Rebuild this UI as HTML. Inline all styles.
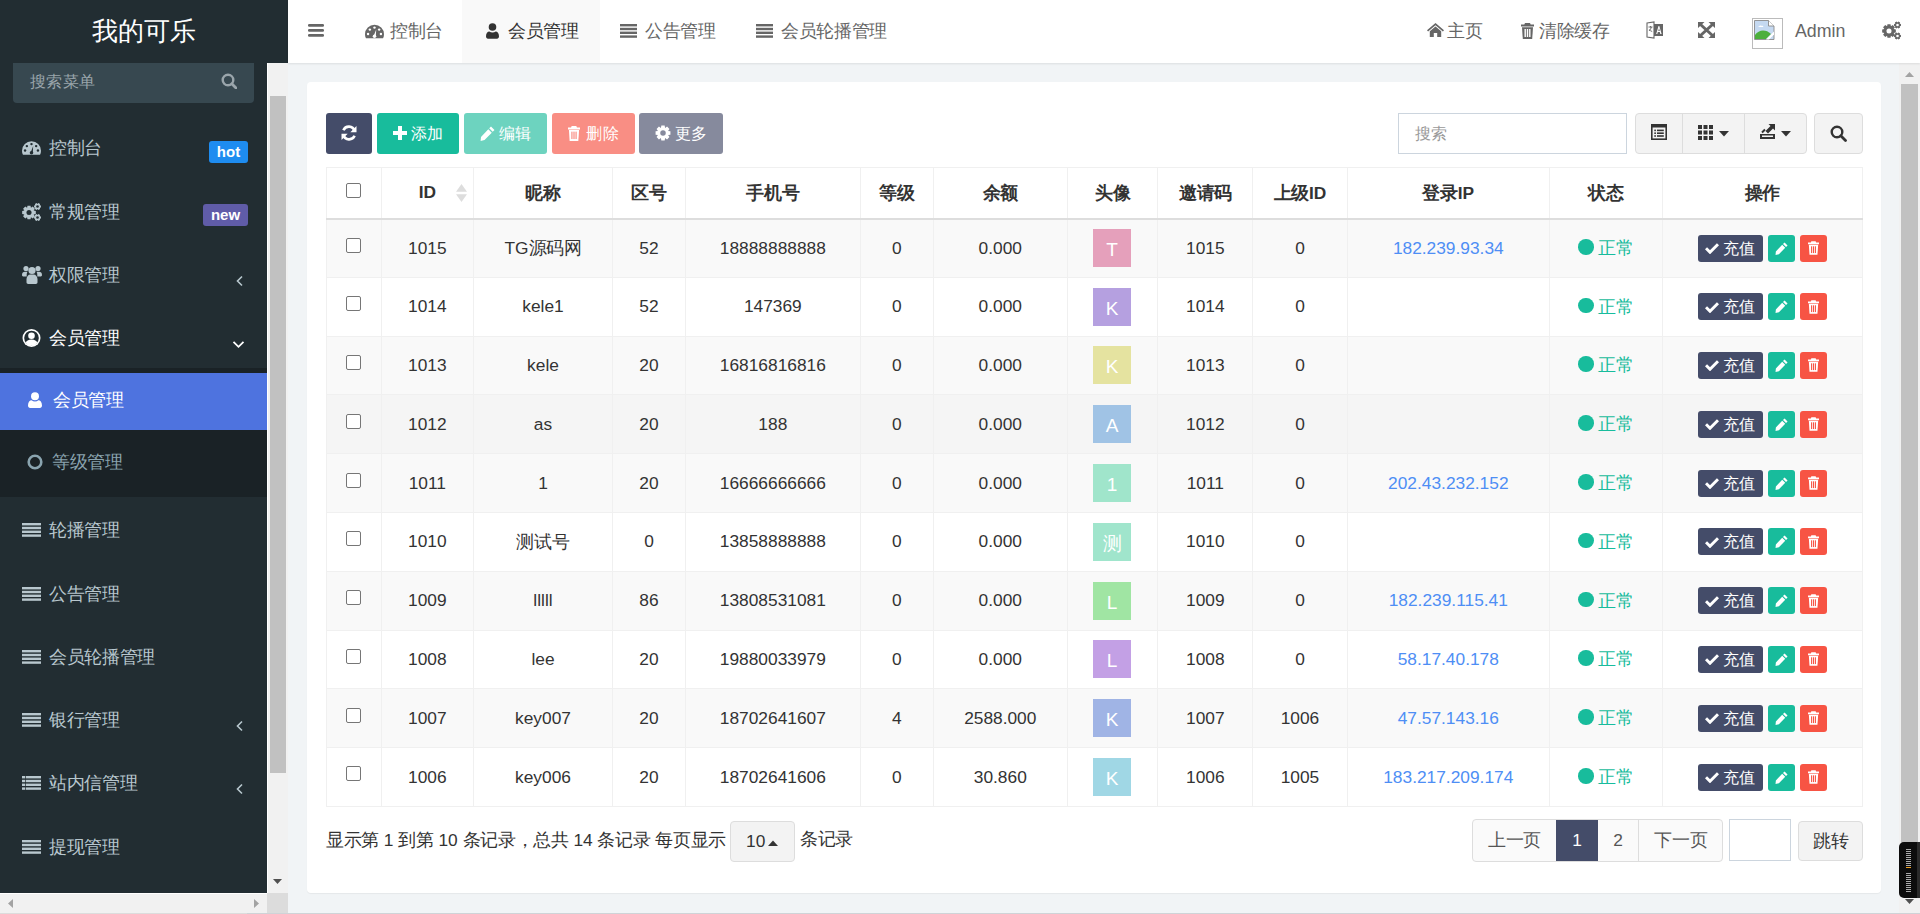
<!DOCTYPE html>
<html><head><meta charset="utf-8"><title>会员管理</title>
<style>
*{box-sizing:border-box;margin:0;padding:0}
html,body{width:1920px;height:914px;overflow:hidden;background:#f1f4f6;font-family:"Liberation Sans",sans-serif;font-size:17.33px;color:#333;position:relative}
svg{display:block}
i{font-style:normal}
#sidebar{position:absolute;left:0;top:0;width:267px;height:893px;background:#222d32;overflow:hidden}
#logo{position:absolute;left:0;top:0;width:288px;height:63px;background:#222d32;color:#fff;font-size:25.4px;line-height:63px;text-align:center}
#search{position:absolute;left:13px;top:63px;width:241px;height:40px;background:#374850;border-radius:0 0 4px 4px}
#search > span{position:absolute;left:17px;top:0;line-height:36px;color:#9aa5ab;font-size:16px}
.mi{position:absolute;left:0;width:267px;height:63px;font-size:17.33px}
.mi .ic{position:absolute;top:50%;transform:translateY(-50%)}
.mi .tx{position:absolute;top:50%;transform:translateY(-50%);white-space:nowrap;line-height:20px}
.badge{position:absolute;left:auto;right:19px;height:22px;line-height:22px;border-radius:3px;color:#fff;font-weight:bold;font-size:15px;text-align:center}
.arr{position:absolute}
#sub{position:absolute;left:0;top:368px;width:267px;height:129px;background:#1a2226}
#vscroll{position:absolute;left:267px;top:63px;width:21px;height:830px;background:#f1f1f1;border-left:1px solid #fff}
#vthumb{position:absolute;left:270px;top:96px;width:16px;height:677px;background:#c1c1c1}
#hscroll{position:absolute;left:0;top:893px;width:267px;height:21px;background:#f1f1f1;border-top:1px solid #fff;border-bottom:1px solid #dcdcdc}
#corner{position:absolute;left:267px;top:893px;width:21px;height:21px;background:#dcdcdc}
#header{position:absolute;left:288px;top:0;width:1632px;height:63px;background:#fff;box-shadow:0 1px 2px rgba(0,0,0,.09);z-index:5}
.nav{position:absolute;top:0;height:62px;line-height:62px;color:#666;white-space:nowrap}
#rscroll{position:absolute;left:1899px;top:63px;width:21px;height:851px;background:#f1f1f1}
#rthumb{position:absolute;left:1901px;top:84px;width:17px;height:760px;background:#c1c1c1}
#card{position:absolute;left:307px;top:82px;width:1574px;height:811px;background:#fff;border-radius:4px;box-shadow:0 1px 1px rgba(0,0,0,.05)}
.btn{position:absolute;top:113px;height:41px;border-radius:3px;color:#fff;line-height:40px;text-align:center;font-size:16px;white-space:nowrap}
#tbl{position:absolute;left:326px;top:167px;border-collapse:collapse;table-layout:fixed;width:1536px}
#tbl td,#tbl th{border:1px solid #f0f0f0;text-align:center;vertical-align:middle;white-space:nowrap;overflow:hidden;padding:0}
#tbl th{height:51px;font-weight:bold;color:#333;border-bottom:2px solid #ddd}
#tbl td{height:58.8px;color:#333}
#tbl tr.odd td{background:#f9f9f9}
#tbl tr.hov td{background:#f5f5f5}
.av{display:inline-block;width:38px;height:38px;line-height:41px;color:#fff;font-size:19px;vertical-align:middle;margin-left:-2px;text-indent:1px}
.ip{color:#4e8ef5}
.st{color:#18bc9c}
.dot{display:inline-block;width:15.5px;height:15.5px;border-radius:50%;background:#18bc9c;vertical-align:-0.5px;margin-right:4px}
.ab{display:inline-block;height:27px;line-height:27px;border-radius:3px;color:#fff;vertical-align:middle;font-size:15.6px;text-align:center}
.cb{display:inline-block;width:15px;height:15px;border:1px solid #767676;border-radius:2px;background:#fff;vertical-align:middle}
.z{font-size:1.02em}
.c{display:inline-block;width:1em;text-align:center;font-style:normal}

</style></head><body>
<div id="sidebar"><div id="search"><span><span class="z"><i class="c">搜</i><i class="c">索</i><i class="c">菜</i><i class="c">单</i></span></span><i style="position:absolute;left:208px;top:9.5px"><svg width="16" height="16" viewBox="0 0 16 16" ><circle cx="7" cy="7" r="5.3" fill="none" stroke="#9aa5ab" stroke-width="2.4"/><path d="M10.8 10.8L15.5 15.5" stroke="#9aa5ab" stroke-width="2.8" stroke-linecap="round"/></svg></i></div><div class="mi" style="top:116.5px;color:#b8c7ce"><span class="ic" style="left:22px"><svg width="19" height="15" viewBox="0 0 18 14.2" ><path d="M9 0.6A9 9 0 0 0 0 9.6c0 1.5.3 2.8.9 4h16.2c.6-1.2.9-2.5.9-4A9 9 0 0 0 9 .6z" fill="#b8c7ce"/><circle cx="2.9" cy="9.4" r="1.15" fill="#222d32"/><circle cx="4.6" cy="5.3" r="1.15" fill="#222d32"/><circle cx="9" cy="3.4" r="1.15" fill="#222d32"/><circle cx="13.4" cy="5.3" r="1.15" fill="#222d32"/><circle cx="15.1" cy="9.4" r="1.15" fill="#222d32"/><path d="M8.3 11.2L10.6 5.2L10.2 11.6z" fill="#222d32"/><circle cx="9" cy="11.6" r="1.7" fill="#222d32"/></svg></span><span class="tx" style="left:49px"><span class="z"><i class="c">控</i><i class="c">制</i><i class="c">台</i></span></span><span class="badge" style="top:24px;background:#1e8cf0;width:39px">hot</span></div><div class="mi" style="top:180.5px;color:#b8c7ce"><span class="ic" style="left:22px"><svg width="20" height="19" viewBox="0 0 20 19" ><path d="M11.66 8.07 L13.83 8.47 L13.83 11.53 L11.66 11.93 L11.66 11.93 L12.91 13.75 L10.75 15.91 L8.93 14.66 L8.93 14.66 L8.53 16.83 L5.47 16.83 L5.07 14.66 L5.07 14.66 L3.25 15.91 L1.09 13.75 L2.34 11.93 L2.34 11.93 L0.17 11.53 L0.17 8.47 L2.34 8.07 L2.34 8.07 L1.09 6.25 L3.25 4.09 L5.07 5.34 L5.07 5.34 L5.47 3.17 L8.53 3.17 L8.93 5.34 L8.93 5.34 L10.75 4.09 L12.91 6.25 L11.66 8.07z" fill="#b8c7ce"/><circle cx="7" cy="10" r="2.52" fill="#222d32"/><path d="M17.74 2.70 L18.95 2.96 L18.95 5.04 L17.74 5.30 L17.74 5.30 L18.12 6.46 L16.32 7.50 L15.50 6.59 L15.50 6.59 L14.68 7.50 L12.88 6.46 L13.26 5.30 L13.26 5.30 L12.05 5.04 L12.05 2.96 L13.26 2.70 L13.26 2.70 L12.88 1.54 L14.68 0.50 L15.50 1.41 L15.50 1.41 L16.32 0.50 L18.12 1.54 L17.74 2.70z" fill="#b8c7ce"/><circle cx="15.5" cy="4" r="1.30" fill="#222d32"/><path d="M17.74 13.70 L18.95 13.96 L18.95 16.04 L17.74 16.30 L17.74 16.30 L18.12 17.46 L16.32 18.50 L15.50 17.59 L15.50 17.59 L14.68 18.50 L12.88 17.46 L13.26 16.30 L13.26 16.30 L12.05 16.04 L12.05 13.96 L13.26 13.70 L13.26 13.70 L12.88 12.54 L14.68 11.50 L15.50 12.41 L15.50 12.41 L16.32 11.50 L18.12 12.54 L17.74 13.70z" fill="#b8c7ce"/><circle cx="15.5" cy="15" r="1.30" fill="#222d32"/></svg></span><span class="tx" style="left:49px"><span class="z"><i class="c">常</i><i class="c">规</i><i class="c">管</i><i class="c">理</i></span></span><span class="badge" style="top:23.5px;background:#605ca8;width:45px">new</span></div><div class="mi" style="top:243.5px;color:#b8c7ce"><span class="ic" style="left:22px"><svg width="20" height="19" viewBox="0 0 20 19" ><circle cx="4" cy="3" r="2.6" fill="#b8c7ce"/><circle cx="16" cy="3" r="2.6" fill="#b8c7ce"/><path d="M0 9.5c0-2 1.2-3.2 3-3.2h2.5c-.5.8-.8 1.8-.8 3v1.6H1.2C.5 10.9 0 10.4 0 9.5z" fill="#b8c7ce"/><path d="M20 9.5c0-2-1.2-3.2-3-3.2h-2.5c.5.8.8 1.8.8 3v1.6h3.5c.7 0 1.2-.5 1.2-1.4z" fill="#b8c7ce"/><circle cx="10" cy="5" r="3.6" fill="#b8c7ce"/><path d="M4.5 14c0-3 1.6-5 4-5h3c2.4 0 4 2 4 5v2.8c0 1-.7 1.7-1.7 1.7H6.2c-1 0-1.7-.7-1.7-1.7z" fill="#b8c7ce"/></svg></span><span class="tx" style="left:49px"><span class="z"><i class="c">权</i><i class="c">限</i><i class="c">管</i><i class="c">理</i></span></span><span class="arr" style="top:31.5px;left:235px"><svg width="9" height="12" viewBox="0 0 9 12" ><path d="M7 1.5L2.5 6L7 10.5" fill="none" stroke="#b8c7ce" stroke-width="1.6"/></svg></span></div><div class="mi" style="top:306.5px;color:#fff"><span class="ic" style="left:22px"><svg width="19" height="19" viewBox="0 0 19 19" ><circle cx="9.5" cy="9.5" r="9" fill="#fff"/><circle cx="9.5" cy="9.5" r="7.3" fill="#222d32"/><circle cx="9.5" cy="7.3" r="3.3" fill="#fff"/><path d="M3.6 14.5c.8-2.2 2.6-3.6 5.9-3.6s5.1 1.4 5.9 3.6c-1.4 1.6-3.5 2.6-5.9 2.6s-4.5-1-5.9-2.6z" fill="#fff"/></svg></span><span class="tx" style="left:49px"><span class="z"><i class="c">会</i><i class="c">员</i><i class="c">管</i><i class="c">理</i></span></span><span class="arr" style="top:33px;left:232px"><svg width="13" height="9" viewBox="0 0 13 9" ><path d="M1.5 1.8L6.5 6.8L11.5 1.8" fill="none" stroke="#fff" stroke-width="1.8"/></svg></span></div><div id="sub"><div style="position:absolute;left:0;top:4.6px;width:267px;height:57px;background:#4e73df"></div></div><div class="mi" style="top:368.5px;color:#fff"><span class="ic" style="left:28px"><svg width="14" height="16" viewBox="0 0 14 16" ><circle cx="7" cy="4.2" r="4" fill="#fff"/><path d="M0 13.5c0-3.4 1.8-5.2 3.6-5.2.9.8 2.1 1.2 3.4 1.2s2.5-.4 3.4-1.2c1.8 0 3.6 1.8 3.6 5.2 0 1.4-.9 2.5-2.2 2.5H2.2C.9 16 0 14.9 0 13.5z" fill="#fff"/></svg></span><span class="tx" style="left:53px"><span class="z"><i class="c">会</i><i class="c">员</i><i class="c">管</i><i class="c">理</i></span></span></div><div class="mi" style="top:430.5px;color:#8aa4af"><span class="ic" style="left:27px"><svg width="16" height="16" viewBox="0 0 16 16" ><circle cx="8" cy="8" r="6.3" fill="none" stroke="#8aa4af" stroke-width="2.6"/></svg></span><span class="tx" style="left:52px"><span class="z"><i class="c">等</i><i class="c">级</i><i class="c">管</i><i class="c">理</i></span></span></div><div class="mi" style="top:498.5px;color:#b8c7ce"><span class="ic" style="left:22px"><svg width="19" height="14" viewBox="0 0 19 14" ><rect x="0" y="0" width="19" height="2.4" fill="#b8c7ce"/><rect x="0" y="3.8" width="19" height="2.4" fill="#b8c7ce"/><rect x="0" y="7.6" width="19" height="2.4" fill="#b8c7ce"/><rect x="0" y="11.4" width="19" height="2.4" fill="#b8c7ce"/></svg></span><span class="tx" style="left:49px"><span class="z"><i class="c">轮</i><i class="c">播</i><i class="c">管</i><i class="c">理</i></span></span></div><div class="mi" style="top:562.5px;color:#b8c7ce"><span class="ic" style="left:22px"><svg width="19" height="14" viewBox="0 0 19 14" ><rect x="0" y="0" width="19" height="2.4" fill="#b8c7ce"/><rect x="0" y="3.8" width="19" height="2.4" fill="#b8c7ce"/><rect x="0" y="7.6" width="19" height="2.4" fill="#b8c7ce"/><rect x="0" y="11.4" width="19" height="2.4" fill="#b8c7ce"/></svg></span><span class="tx" style="left:49px"><span class="z"><i class="c">公</i><i class="c">告</i><i class="c">管</i><i class="c">理</i></span></span></div><div class="mi" style="top:625.5px;color:#b8c7ce"><span class="ic" style="left:22px"><svg width="19" height="14" viewBox="0 0 19 14" ><rect x="0" y="0" width="19" height="2.4" fill="#b8c7ce"/><rect x="0" y="3.8" width="19" height="2.4" fill="#b8c7ce"/><rect x="0" y="7.6" width="19" height="2.4" fill="#b8c7ce"/><rect x="0" y="11.4" width="19" height="2.4" fill="#b8c7ce"/></svg></span><span class="tx" style="left:49px"><span class="z"><i class="c">会</i><i class="c">员</i><i class="c">轮</i><i class="c">播</i><i class="c">管</i><i class="c">理</i></span></span></div><div class="mi" style="top:688.5px;color:#b8c7ce"><span class="ic" style="left:22px"><svg width="19" height="14" viewBox="0 0 19 14" ><rect x="0" y="0" width="19" height="2.4" fill="#b8c7ce"/><rect x="0" y="3.8" width="19" height="2.4" fill="#b8c7ce"/><rect x="0" y="7.6" width="19" height="2.4" fill="#b8c7ce"/><rect x="0" y="11.4" width="19" height="2.4" fill="#b8c7ce"/></svg></span><span class="tx" style="left:49px"><span class="z"><i class="c">银</i><i class="c">行</i><i class="c">管</i><i class="c">理</i></span></span><span class="arr" style="top:31.5px;left:235px"><svg width="9" height="12" viewBox="0 0 9 12" ><path d="M7 1.5L2.5 6L7 10.5" fill="none" stroke="#b8c7ce" stroke-width="1.6"/></svg></span></div><div class="mi" style="top:751.5px;color:#b8c7ce"><span class="ic" style="left:22px"><svg width="19" height="14" viewBox="0 0 19 14" ><rect x="0" y="0" width="3" height="2.4" fill="#b8c7ce"/><rect x="3.7" y="0" width="15.3" height="2.4" fill="#b8c7ce"/><rect x="0" y="3.8" width="3" height="2.4" fill="#b8c7ce"/><rect x="3.7" y="3.8" width="15.3" height="2.4" fill="#b8c7ce"/><rect x="0" y="7.6" width="3" height="2.4" fill="#b8c7ce"/><rect x="3.7" y="7.6" width="15.3" height="2.4" fill="#b8c7ce"/><rect x="0" y="11.4" width="3" height="2.4" fill="#b8c7ce"/><rect x="3.7" y="11.4" width="15.3" height="2.4" fill="#b8c7ce"/></svg></span><span class="tx" style="left:49px"><span class="z"><i class="c">站</i><i class="c">内</i><i class="c">信</i><i class="c">管</i><i class="c">理</i></span></span><span class="arr" style="top:31.5px;left:235px"><svg width="9" height="12" viewBox="0 0 9 12" ><path d="M7 1.5L2.5 6L7 10.5" fill="none" stroke="#b8c7ce" stroke-width="1.6"/></svg></span></div><div class="mi" style="top:815.5px;color:#b8c7ce"><span class="ic" style="left:22px"><svg width="19" height="14" viewBox="0 0 19 14" ><rect x="0" y="0" width="19" height="2.4" fill="#b8c7ce"/><rect x="0" y="3.8" width="19" height="2.4" fill="#b8c7ce"/><rect x="0" y="7.6" width="19" height="2.4" fill="#b8c7ce"/><rect x="0" y="11.4" width="19" height="2.4" fill="#b8c7ce"/></svg></span><span class="tx" style="left:49px"><span class="z"><i class="c">提</i><i class="c">现</i><i class="c">管</i><i class="c">理</i></span></span></div></div><div id="logo"><span class="z"><i class="c">我</i><i class="c">的</i><i class="c">可</i><i class="c">乐</i></span></div>
<div id="vscroll"></div><div id="vthumb"></div>
<div id="hscroll"></div><div id="corner"></div>
<div id="header"><i style="position:absolute;left:20px;top:24px"><svg width="16" height="13" viewBox="0 0 16 13" ><rect x="0" y="0" width="16" height="2.8" rx="1.2" fill="#666"/><rect x="0" y="5" width="16" height="2.8" rx="1.2" fill="#666"/><rect x="0" y="10" width="16" height="2.8" rx="1.2" fill="#666"/></svg></i><div class="nav" style="left:77px"><i style="position:absolute;left:0;top:24px"><svg width="19" height="15" viewBox="0 0 18 14.2" ><path d="M9 0.6A9 9 0 0 0 0 9.6c0 1.5.3 2.8.9 4h16.2c.6-1.2.9-2.5.9-4A9 9 0 0 0 9 .6z" fill="#666"/><circle cx="2.9" cy="9.4" r="1.15" fill="#fff"/><circle cx="4.6" cy="5.3" r="1.15" fill="#fff"/><circle cx="9" cy="3.4" r="1.15" fill="#fff"/><circle cx="13.4" cy="5.3" r="1.15" fill="#fff"/><circle cx="15.1" cy="9.4" r="1.15" fill="#fff"/><path d="M8.3 11.2L10.6 5.2L10.2 11.6z" fill="#fff"/><circle cx="9" cy="11.6" r="1.7" fill="#fff"/></svg></i><span style="position:absolute;left:25px;top:0"><span class="z"><i class="c">控</i><i class="c">制</i><i class="c">台</i></span></span></div><div style="position:absolute;left:174px;top:0;width:137.5px;height:62.5px;background:#f9f9f9"></div><div class="nav" style="left:198px;color:#333"><i style="position:absolute;left:0;top:23px"><svg width="13" height="16" viewBox="0 0 13 16" ><circle cx="6.5" cy="4" r="3.8" fill="#333"/><path d="M0 13.3c0-3.2 1.6-4.9 3.3-4.9.9.7 2 1.1 3.2 1.1s2.3-.4 3.2-1.1c1.7 0 3.3 1.7 3.3 4.9 0 1.5-.8 2.4-2 2.4H2C.8 15.7 0 14.8 0 13.3z" fill="#333"/></svg></i><span style="position:absolute;left:22px;top:0"><span class="z"><i class="c">会</i><i class="c">员</i><i class="c">管</i><i class="c">理</i></span></span></div><div class="nav" style="left:332px"><i style="position:absolute;left:0;top:24px"><svg width="17" height="14" viewBox="0 0 17 14" ><rect x="0" y="0" width="17" height="2.4" fill="#666"/><rect x="0" y="3.8" width="17" height="2.4" fill="#666"/><rect x="0" y="7.6" width="17" height="2.4" fill="#666"/><rect x="0" y="11.4" width="17" height="2.4" fill="#666"/></svg></i><span style="position:absolute;left:25px;top:0"><span class="z"><i class="c">公</i><i class="c">告</i><i class="c">管</i><i class="c">理</i></span></span></div><div class="nav" style="left:468px"><i style="position:absolute;left:0;top:24px"><svg width="17" height="14" viewBox="0 0 17 14" ><rect x="0" y="0" width="17" height="2.4" fill="#666"/><rect x="0" y="3.8" width="17" height="2.4" fill="#666"/><rect x="0" y="7.6" width="17" height="2.4" fill="#666"/><rect x="0" y="11.4" width="17" height="2.4" fill="#666"/></svg></i><span style="position:absolute;left:25px;top:0"><span class="z"><i class="c">会</i><i class="c">员</i><i class="c">轮</i><i class="c">播</i><i class="c">管</i><i class="c">理</i></span></span></div><div class="nav" style="left:1139px"><i style="position:absolute;left:0;top:23px"><svg width="17" height="14" viewBox="0 0 17 14" ><path d="M8.5 0L0 7.2l1.1 1.2L8.5 2.3l7.4 6.1L17 7.2z" fill="#666"/><path d="M2.8 8.3L8.5 3.6l5.7 4.7V14h-4V10H6.8v4h-4z" fill="#666"/></svg></i><span style="position:absolute;left:20px;top:0"><span class="z"><i class="c">主</i><i class="c">页</i></span></span></div><div class="nav" style="left:1233px"><i style="position:absolute;left:0;top:23px"><svg width="13" height="16" viewBox="0 0 13 16" ><path d="M4 0h5l.7 1.6H13v2H0v-2h3.3z" fill="#666"/><path d="M1 4.3h11l-.8 11.7H1.8z" fill="#666"/><rect x="3.5" y="6" width="1.4" height="8" fill="#fff"/><rect x="5.8" y="6" width="1.4" height="8" fill="#fff"/><rect x="8.1" y="6" width="1.4" height="8" fill="#fff"/></svg></i><span style="position:absolute;left:18px;top:0"><span class="z"><i class="c">清</i><i class="c">除</i><i class="c">缓</i><i class="c">存</i></span></span></div><i style="position:absolute;left:1358px;top:21px"><svg width="18" height="18" viewBox="0 0 18 18" ><path d="M1 2l7 -1v16l-7-1z" fill="none" stroke="#666" stroke-width="1.1"/><path d="M8 3h9v12H8z" fill="#666"/><path d="M10.2 13l2.3-8h.8l2.3 8h-1.3l-.5-1.9h-2l-.5 1.9zm2.1-3h1.5l-.75-2.8z" fill="#fff"/><path d="M2.5 6h4M4.5 5v1.5M3 10c1.2-1 2-2.4 2.5-4M3.2 8.5c.8 1 1.8 1.7 3 2" stroke="#666" stroke-width=".9" fill="none"/></svg></i><i style="position:absolute;left:1410px;top:22px"><svg width="17" height="16" viewBox="0 0 17 16" ><path d="M2.5 2.5L14.5 13.5M14.5 2.5L2.5 13.5" stroke="#666" stroke-width="3"/><path d="M0 0h6.5L0 6z M17 0h-6.5L17 6z M0 16h6.5L0 10z M17 16h-6.5L17 10z" fill="#666"/></svg></i><div style="position:absolute;left:1464px;top:18px;width:31px;height:31px;border:1px solid #bbb;background:#fff"><svg width="21" height="20" viewBox="0 0 21 20" style="position:absolute;left:1px;top:1px"><path d="M.5 .5h14l5.5 5.5v13.5H.5z" fill="#c5d9f1" stroke="#8a8a8a" stroke-width=".9"/><path d="M14.5 .5v5.5h5.5" fill="#fff" stroke="#8a8a8a" stroke-width=".9"/><path d="M5 6.5c.4-1.2 2-1.4 2.6-.6.8-.3 1.8.2 1.8 1H4.2c0-.3.3-.4.8-.4z" fill="#fff"/><path d="M1 19V15c2-3 5-4.5 8-4.5s5.5 1 8 3.5L12 19z" fill="#4caf3c"/><path d="M12 19.5L20 11.5v3L15 19.5z" fill="#fff"/></svg></div><div class="nav" style="left:1507px;font-size:17.8px">Admin</div><i style="position:absolute;left:1594px;top:21px"><svg width="20" height="19" viewBox="0 0 20 19" ><path d="M11.66 8.07 L13.83 8.47 L13.83 11.53 L11.66 11.93 L11.66 11.93 L12.91 13.75 L10.75 15.91 L8.93 14.66 L8.93 14.66 L8.53 16.83 L5.47 16.83 L5.07 14.66 L5.07 14.66 L3.25 15.91 L1.09 13.75 L2.34 11.93 L2.34 11.93 L0.17 11.53 L0.17 8.47 L2.34 8.07 L2.34 8.07 L1.09 6.25 L3.25 4.09 L5.07 5.34 L5.07 5.34 L5.47 3.17 L8.53 3.17 L8.93 5.34 L8.93 5.34 L10.75 4.09 L12.91 6.25 L11.66 8.07z" fill="#666"/><circle cx="7" cy="10" r="2.52" fill="#fff"/><path d="M17.74 2.70 L18.95 2.96 L18.95 5.04 L17.74 5.30 L17.74 5.30 L18.12 6.46 L16.32 7.50 L15.50 6.59 L15.50 6.59 L14.68 7.50 L12.88 6.46 L13.26 5.30 L13.26 5.30 L12.05 5.04 L12.05 2.96 L13.26 2.70 L13.26 2.70 L12.88 1.54 L14.68 0.50 L15.50 1.41 L15.50 1.41 L16.32 0.50 L18.12 1.54 L17.74 2.70z" fill="#666"/><circle cx="15.5" cy="4" r="1.30" fill="#fff"/><path d="M17.74 13.70 L18.95 13.96 L18.95 16.04 L17.74 16.30 L17.74 16.30 L18.12 17.46 L16.32 18.50 L15.50 17.59 L15.50 17.59 L14.68 18.50 L12.88 17.46 L13.26 16.30 L13.26 16.30 L12.05 16.04 L12.05 13.96 L13.26 13.70 L13.26 13.70 L12.88 12.54 L14.68 11.50 L15.50 12.41 L15.50 12.41 L16.32 11.50 L18.12 12.54 L17.74 13.70z" fill="#666"/><circle cx="15.5" cy="15" r="1.30" fill="#fff"/></svg></i></div>
<div id="rscroll"></div><div id="rthumb"></div>
<div id="card"></div><div class="btn" style="left:326px;width:46px;background:#444c69"><span style="display:inline-flex;align-items:center;height:40px"><svg width="16" height="16" viewBox="0 0 16 16" ><path d="M13.6 5.8A6 6 0 0 0 2.4 5.2" fill="none" stroke="#fff" stroke-width="2.6"/><path d="M15.5 1v6.2H9.3z" fill="#fff"/><path d="M2.4 10.2a6 6 0 0 0 11.2.6" fill="none" stroke="#fff" stroke-width="2.6"/><path d="M.5 15V8.8h6.2z" fill="#fff"/></svg></span></div><div class="btn" style="left:377px;width:82px;background:#18bc9c"><span style="display:inline-flex;align-items:center;height:40px;vertical-align:top"><svg width="14" height="14" viewBox="0 0 14 14" ><path d="M5 0h4v5h5v4H9v5H5V9H0V5h5z" fill="#fff"/></svg><span style="margin-left:4px"><span class="z"><i class="c">添</i><i class="c">加</i></span></span></span></div><div class="btn" style="left:464px;width:83px;background:#6dd3bf"><span style="display:inline-flex;align-items:center;height:40px;vertical-align:top"><svg width="15" height="15" viewBox="0 0 15 15" ><path d="M11 .5l3.5 3.5-1.8 1.8-3.5-3.5zM8.3 3.2l3.5 3.5L4.5 14 .6 14.9 1 11z" fill="#fff"/></svg><span style="margin-left:4px"><span class="z"><i class="c">编</i><i class="c">辑</i></span></span></span></div><div class="btn" style="left:552px;width:83px;background:#f98e84"><span style="display:inline-flex;align-items:center;height:40px;vertical-align:top"><svg width="12" height="15" viewBox="0 0 13 16" ><path d="M4 0h5l.7 1.6H13v2H0v-2h3.3z" fill="#fff"/><path d="M1 4.3h11l-.8 11.7H1.8z" fill="#fff"/><rect x="3.6" y="6" width="1.3" height="8" fill="#f98e84"/><rect x="5.85" y="6" width="1.3" height="8" fill="#f98e84"/><rect x="8.1" y="6" width="1.3" height="8" fill="#f98e84"/></svg><span style="margin-left:6px"><span class="z"><i class="c">删</i><i class="c">除</i></span></span></span></div><div class="btn" style="left:639px;width:84px;background:#868a9d"><span style="display:inline-flex;align-items:center;height:40px;vertical-align:top"><svg width="16" height="16" viewBox="0 0 16 16" ><path d="M13.06 5.91 L15.42 6.34 L15.42 9.66 L13.06 10.09 L13.06 10.09 L14.42 12.07 L12.07 14.42 L10.09 13.06 L10.09 13.06 L9.66 15.42 L6.34 15.42 L5.91 13.06 L5.91 13.06 L3.93 14.42 L1.58 12.07 L2.94 10.09 L2.94 10.09 L0.58 9.66 L0.58 6.34 L2.94 5.91 L2.94 5.91 L1.58 3.93 L3.93 1.58 L5.91 2.94 L5.91 2.94 L6.34 0.58 L9.66 0.58 L10.09 2.94 L10.09 2.94 L12.07 1.58 L14.42 3.93 L13.06 5.91z" fill="#fff"/><circle cx="8" cy="8" r="2.74" fill="#868a9d"/></svg><span style="margin-left:4px"><span class="z"><i class="c">更</i><i class="c">多</i></span></span></span></div><div style="position:absolute;left:1398px;top:113px;width:229px;height:41px;border:1px solid #ccd5de;background:#fff"><span style="position:absolute;left:16px;top:0;line-height:39px;color:#999;font-size:16px"><span class="z"><i class="c">搜</i><i class="c">索</i></span></span></div><div style="position:absolute;left:1635px;top:113px;width:172px;height:41px;border:1px solid #ddd;border-radius:4px;background:#f3f3f3"></div><div style="position:absolute;left:1682px;top:114px;width:1px;height:39px;background:#ddd"></div><div style="position:absolute;left:1744px;top:114px;width:1px;height:39px;background:#ddd"></div><i style="position:absolute;left:1651px;top:124px"><svg width="16" height="16" viewBox="0 0 16 16" ><rect x=".8" y=".8" width="14.4" height="14.4" fill="none" stroke="#333" stroke-width="1.6"/><rect x="1" y="1" width="14" height="2.5" fill="#333"/><rect x="3.3" y="5.6" width="1.6" height="1.6" fill="#333"/><rect x="6" y="5.6" width="6.8" height="1.6" fill="#333"/><rect x="3.3" y="8.4" width="1.6" height="1.6" fill="#333"/><rect x="6" y="8.4" width="6.8" height="1.6" fill="#333"/><rect x="3.3" y="11.2" width="1.6" height="1.6" fill="#333"/><rect x="6" y="11.2" width="6.8" height="1.6" fill="#333"/></svg></i><i style="position:absolute;left:1698px;top:125px"><svg width="15" height="15" viewBox="0 0 15 15" ><rect x="0" y="0" width="4" height="4" fill="#333"/><rect x="0" y="5.5" width="4" height="4" fill="#333"/><rect x="0" y="11" width="4" height="4" fill="#333"/><rect x="5.5" y="0" width="4" height="4" fill="#333"/><rect x="5.5" y="5.5" width="4" height="4" fill="#333"/><rect x="5.5" y="11" width="4" height="4" fill="#333"/><rect x="11" y="0" width="4" height="4" fill="#333"/><rect x="11" y="5.5" width="4" height="4" fill="#333"/><rect x="11" y="11" width="4" height="4" fill="#333"/></svg></i><i style="position:absolute;left:1719px;top:131px"><svg width="10" height="6" viewBox="0 0 10 6" ><path d="M0 0h10L5 5.5z" fill="#333"/></svg></i><i style="position:absolute;left:1760px;top:124px"><svg width="17" height="15" viewBox="0 0 17 15" ><rect x="0" y="10" width="15" height="5" fill="#333"/><rect x="2" y="11.5" width="11" height="1.5" fill="#f3f3f3"/><path d="M15 0v6.5l-2-2-5 5-2.5-2.5 5-5-2-2z" fill="#333"/><path d="M2 8.5L5 5.5" stroke="#333" stroke-width="2"/></svg></i><i style="position:absolute;left:1781px;top:131px"><svg width="10" height="6" viewBox="0 0 10 6" ><path d="M0 0h10L5 5.5z" fill="#333"/></svg></i><div style="position:absolute;left:1814px;top:113px;width:49px;height:41px;border:1px solid #ddd;border-radius:4px;background:#f3f3f3"></div><i style="position:absolute;left:1830px;top:125px"><svg width="17" height="17" viewBox="0 0 17 17" ><circle cx="7" cy="7" r="5.3" fill="none" stroke="#333" stroke-width="2.4"/><path d="M10.8 10.8L15.5 15.5" stroke="#333" stroke-width="2.8" stroke-linecap="round"/></svg></i><table id="tbl"><colgroup><col style="width:54.7px"><col style="width:92.3px"><col style="width:139px"><col style="width:73px"><col style="width:174.7px"><col style="width:73.3px"><col style="width:133.6px"><col style="width:90.9px"><col style="width:94.8px"><col style="width:94.4px"><col style="width:202.3px"><col style="width:112.7px"><col style="width:200.3px"></colgroup><tr class="hd"><th><span class="cb" style="position:relative;top:-3px"></span></th><th style="position:relative">ID<svg width="11" height="18" viewBox="0 0 11 18" style="position:absolute;right:6px;top:16px"><path d="M5.5 0L11 7.8H0z" fill="#ddd"/><path d="M5.5 18L11 10.2H0z" fill="#ddd"/></svg></th><th><span class="z"><i class="c">昵</i><i class="c">称</i></span></th><th><span class="z"><i class="c">区</i><i class="c">号</i></span></th><th><span class="z"><i class="c">手</i><i class="c">机</i><i class="c">号</i></span></th><th><span class="z"><i class="c">等</i><i class="c">级</i></span></th><th><span class="z"><i class="c">余</i><i class="c">额</i></span></th><th><span class="z"><i class="c">头</i><i class="c">像</i></span></th><th><span class="z"><i class="c">邀</i><i class="c">请</i><i class="c">码</i></span></th><th><span class="z"><i class="c">上</i><i class="c">级</i></span>ID</th><th><span class="z"><i class="c">登</i><i class="c">录</i></span>IP</th><th><span class="z"><i class="c">状</i><i class="c">态</i></span></th><th><span class="z"><i class="c">操</i><i class="c">作</i></span></th></tr><tr class="odd"><td><span class="cb" style="position:relative;top:-4px"></span></td><td>1015</td><td>TG<span class="z"><i class="c">源</i><i class="c">码</i><i class="c">网</i></span></td><td>52</td><td>18888888888</td><td>0</td><td>0.000</td><td><span class="av" style="background:#e5a0bb">T</span></td><td>1015</td><td>0</td><td><span class="ip">182.239.93.34</span></td><td><span class="st"><span class="dot"></span><span class="z"><i class="c">正</i><i class="c">常</i></span></span></td><td><span class="ab" style="width:65px;background:#444c69;margin-right:5px"><span style="display:inline-flex;align-items:center;height:27px"><svg width="14" height="12" viewBox="0 0 14 12" ><path d="M1 6.2l4 4L13 2.2" fill="none" stroke="#fff" stroke-width="3"/></svg><span style="margin-left:4px"><span class="z"><i class="c">充</i><i class="c">值</i></span></span></span></span><span class="ab" style="width:27px;background:#18bc9c;margin-right:5px"><span style="display:inline-flex;align-items:center;justify-content:center;height:27px;width:27px"><svg width="13" height="13" viewBox="0 0 15 15" ><path d="M11 .5l3.5 3.5-1.8 1.8-3.5-3.5zM8.3 3.2l3.5 3.5L4.5 14 .6 14.9 1 11z" fill="#fff"/></svg></span></span><span class="ab" style="width:27px;background:#f75444"><span style="display:inline-flex;align-items:center;justify-content:center;height:27px;width:27px"><svg width="11" height="14" viewBox="0 0 13 16" ><path d="M4 0h5l.7 1.6H13v2H0v-2h3.3z" fill="#fff"/><path d="M1 4.3h11l-.8 11.7H1.8z" fill="#fff"/><rect x="3.6" y="6" width="1.3" height="8" fill="#f75444"/><rect x="5.85" y="6" width="1.3" height="8" fill="#f75444"/><rect x="8.1" y="6" width="1.3" height="8" fill="#f75444"/></svg></span></span></td></tr><tr class="even"><td><span class="cb" style="position:relative;top:-4px"></span></td><td>1014</td><td>kele1</td><td>52</td><td>147369</td><td>0</td><td>0.000</td><td><span class="av" style="background:#b5a0e0">K</span></td><td>1014</td><td>0</td><td><span class="ip"></span></td><td><span class="st"><span class="dot"></span><span class="z"><i class="c">正</i><i class="c">常</i></span></span></td><td><span class="ab" style="width:65px;background:#444c69;margin-right:5px"><span style="display:inline-flex;align-items:center;height:27px"><svg width="14" height="12" viewBox="0 0 14 12" ><path d="M1 6.2l4 4L13 2.2" fill="none" stroke="#fff" stroke-width="3"/></svg><span style="margin-left:4px"><span class="z"><i class="c">充</i><i class="c">值</i></span></span></span></span><span class="ab" style="width:27px;background:#18bc9c;margin-right:5px"><span style="display:inline-flex;align-items:center;justify-content:center;height:27px;width:27px"><svg width="13" height="13" viewBox="0 0 15 15" ><path d="M11 .5l3.5 3.5-1.8 1.8-3.5-3.5zM8.3 3.2l3.5 3.5L4.5 14 .6 14.9 1 11z" fill="#fff"/></svg></span></span><span class="ab" style="width:27px;background:#f75444"><span style="display:inline-flex;align-items:center;justify-content:center;height:27px;width:27px"><svg width="11" height="14" viewBox="0 0 13 16" ><path d="M4 0h5l.7 1.6H13v2H0v-2h3.3z" fill="#fff"/><path d="M1 4.3h11l-.8 11.7H1.8z" fill="#fff"/><rect x="3.6" y="6" width="1.3" height="8" fill="#f75444"/><rect x="5.85" y="6" width="1.3" height="8" fill="#f75444"/><rect x="8.1" y="6" width="1.3" height="8" fill="#f75444"/></svg></span></span></td></tr><tr class="odd"><td><span class="cb" style="position:relative;top:-4px"></span></td><td>1013</td><td>kele</td><td>20</td><td>16816816816</td><td>0</td><td>0.000</td><td><span class="av" style="background:#e5e3a0">K</span></td><td>1013</td><td>0</td><td><span class="ip"></span></td><td><span class="st"><span class="dot"></span><span class="z"><i class="c">正</i><i class="c">常</i></span></span></td><td><span class="ab" style="width:65px;background:#444c69;margin-right:5px"><span style="display:inline-flex;align-items:center;height:27px"><svg width="14" height="12" viewBox="0 0 14 12" ><path d="M1 6.2l4 4L13 2.2" fill="none" stroke="#fff" stroke-width="3"/></svg><span style="margin-left:4px"><span class="z"><i class="c">充</i><i class="c">值</i></span></span></span></span><span class="ab" style="width:27px;background:#18bc9c;margin-right:5px"><span style="display:inline-flex;align-items:center;justify-content:center;height:27px;width:27px"><svg width="13" height="13" viewBox="0 0 15 15" ><path d="M11 .5l3.5 3.5-1.8 1.8-3.5-3.5zM8.3 3.2l3.5 3.5L4.5 14 .6 14.9 1 11z" fill="#fff"/></svg></span></span><span class="ab" style="width:27px;background:#f75444"><span style="display:inline-flex;align-items:center;justify-content:center;height:27px;width:27px"><svg width="11" height="14" viewBox="0 0 13 16" ><path d="M4 0h5l.7 1.6H13v2H0v-2h3.3z" fill="#fff"/><path d="M1 4.3h11l-.8 11.7H1.8z" fill="#fff"/><rect x="3.6" y="6" width="1.3" height="8" fill="#f75444"/><rect x="5.85" y="6" width="1.3" height="8" fill="#f75444"/><rect x="8.1" y="6" width="1.3" height="8" fill="#f75444"/></svg></span></span></td></tr><tr class="hov"><td><span class="cb" style="position:relative;top:-4px"></span></td><td>1012</td><td>as</td><td>20</td><td>188</td><td>0</td><td>0.000</td><td><span class="av" style="background:#a0c3e5">A</span></td><td>1012</td><td>0</td><td><span class="ip"></span></td><td><span class="st"><span class="dot"></span><span class="z"><i class="c">正</i><i class="c">常</i></span></span></td><td><span class="ab" style="width:65px;background:#444c69;margin-right:5px"><span style="display:inline-flex;align-items:center;height:27px"><svg width="14" height="12" viewBox="0 0 14 12" ><path d="M1 6.2l4 4L13 2.2" fill="none" stroke="#fff" stroke-width="3"/></svg><span style="margin-left:4px"><span class="z"><i class="c">充</i><i class="c">值</i></span></span></span></span><span class="ab" style="width:27px;background:#18bc9c;margin-right:5px"><span style="display:inline-flex;align-items:center;justify-content:center;height:27px;width:27px"><svg width="13" height="13" viewBox="0 0 15 15" ><path d="M11 .5l3.5 3.5-1.8 1.8-3.5-3.5zM8.3 3.2l3.5 3.5L4.5 14 .6 14.9 1 11z" fill="#fff"/></svg></span></span><span class="ab" style="width:27px;background:#f75444"><span style="display:inline-flex;align-items:center;justify-content:center;height:27px;width:27px"><svg width="11" height="14" viewBox="0 0 13 16" ><path d="M4 0h5l.7 1.6H13v2H0v-2h3.3z" fill="#fff"/><path d="M1 4.3h11l-.8 11.7H1.8z" fill="#fff"/><rect x="3.6" y="6" width="1.3" height="8" fill="#f75444"/><rect x="5.85" y="6" width="1.3" height="8" fill="#f75444"/><rect x="8.1" y="6" width="1.3" height="8" fill="#f75444"/></svg></span></span></td></tr><tr class="odd"><td><span class="cb" style="position:relative;top:-4px"></span></td><td>1011</td><td>1</td><td>20</td><td>16666666666</td><td>0</td><td>0.000</td><td><span class="av" style="background:#a0e5cb">1</span></td><td>1011</td><td>0</td><td><span class="ip">202.43.232.152</span></td><td><span class="st"><span class="dot"></span><span class="z"><i class="c">正</i><i class="c">常</i></span></span></td><td><span class="ab" style="width:65px;background:#444c69;margin-right:5px"><span style="display:inline-flex;align-items:center;height:27px"><svg width="14" height="12" viewBox="0 0 14 12" ><path d="M1 6.2l4 4L13 2.2" fill="none" stroke="#fff" stroke-width="3"/></svg><span style="margin-left:4px"><span class="z"><i class="c">充</i><i class="c">值</i></span></span></span></span><span class="ab" style="width:27px;background:#18bc9c;margin-right:5px"><span style="display:inline-flex;align-items:center;justify-content:center;height:27px;width:27px"><svg width="13" height="13" viewBox="0 0 15 15" ><path d="M11 .5l3.5 3.5-1.8 1.8-3.5-3.5zM8.3 3.2l3.5 3.5L4.5 14 .6 14.9 1 11z" fill="#fff"/></svg></span></span><span class="ab" style="width:27px;background:#f75444"><span style="display:inline-flex;align-items:center;justify-content:center;height:27px;width:27px"><svg width="11" height="14" viewBox="0 0 13 16" ><path d="M4 0h5l.7 1.6H13v2H0v-2h3.3z" fill="#fff"/><path d="M1 4.3h11l-.8 11.7H1.8z" fill="#fff"/><rect x="3.6" y="6" width="1.3" height="8" fill="#f75444"/><rect x="5.85" y="6" width="1.3" height="8" fill="#f75444"/><rect x="8.1" y="6" width="1.3" height="8" fill="#f75444"/></svg></span></span></td></tr><tr class="even"><td><span class="cb" style="position:relative;top:-4px"></span></td><td>1010</td><td><span class="z"><i class="c">测</i><i class="c">试</i><i class="c">号</i></span></td><td>0</td><td>13858888888</td><td>0</td><td>0.000</td><td><span class="av" style="background:#a0e5cc"><span class="z"><i class="c">测</i></span></span></td><td>1010</td><td>0</td><td><span class="ip"></span></td><td><span class="st"><span class="dot"></span><span class="z"><i class="c">正</i><i class="c">常</i></span></span></td><td><span class="ab" style="width:65px;background:#444c69;margin-right:5px"><span style="display:inline-flex;align-items:center;height:27px"><svg width="14" height="12" viewBox="0 0 14 12" ><path d="M1 6.2l4 4L13 2.2" fill="none" stroke="#fff" stroke-width="3"/></svg><span style="margin-left:4px"><span class="z"><i class="c">充</i><i class="c">值</i></span></span></span></span><span class="ab" style="width:27px;background:#18bc9c;margin-right:5px"><span style="display:inline-flex;align-items:center;justify-content:center;height:27px;width:27px"><svg width="13" height="13" viewBox="0 0 15 15" ><path d="M11 .5l3.5 3.5-1.8 1.8-3.5-3.5zM8.3 3.2l3.5 3.5L4.5 14 .6 14.9 1 11z" fill="#fff"/></svg></span></span><span class="ab" style="width:27px;background:#f75444"><span style="display:inline-flex;align-items:center;justify-content:center;height:27px;width:27px"><svg width="11" height="14" viewBox="0 0 13 16" ><path d="M4 0h5l.7 1.6H13v2H0v-2h3.3z" fill="#fff"/><path d="M1 4.3h11l-.8 11.7H1.8z" fill="#fff"/><rect x="3.6" y="6" width="1.3" height="8" fill="#f75444"/><rect x="5.85" y="6" width="1.3" height="8" fill="#f75444"/><rect x="8.1" y="6" width="1.3" height="8" fill="#f75444"/></svg></span></span></td></tr><tr class="odd"><td><span class="cb" style="position:relative;top:-4px"></span></td><td>1009</td><td>lllll</td><td>86</td><td>13808531081</td><td>0</td><td>0.000</td><td><span class="av" style="background:#a0e5a3">L</span></td><td>1009</td><td>0</td><td><span class="ip">182.239.115.41</span></td><td><span class="st"><span class="dot"></span><span class="z"><i class="c">正</i><i class="c">常</i></span></span></td><td><span class="ab" style="width:65px;background:#444c69;margin-right:5px"><span style="display:inline-flex;align-items:center;height:27px"><svg width="14" height="12" viewBox="0 0 14 12" ><path d="M1 6.2l4 4L13 2.2" fill="none" stroke="#fff" stroke-width="3"/></svg><span style="margin-left:4px"><span class="z"><i class="c">充</i><i class="c">值</i></span></span></span></span><span class="ab" style="width:27px;background:#18bc9c;margin-right:5px"><span style="display:inline-flex;align-items:center;justify-content:center;height:27px;width:27px"><svg width="13" height="13" viewBox="0 0 15 15" ><path d="M11 .5l3.5 3.5-1.8 1.8-3.5-3.5zM8.3 3.2l3.5 3.5L4.5 14 .6 14.9 1 11z" fill="#fff"/></svg></span></span><span class="ab" style="width:27px;background:#f75444"><span style="display:inline-flex;align-items:center;justify-content:center;height:27px;width:27px"><svg width="11" height="14" viewBox="0 0 13 16" ><path d="M4 0h5l.7 1.6H13v2H0v-2h3.3z" fill="#fff"/><path d="M1 4.3h11l-.8 11.7H1.8z" fill="#fff"/><rect x="3.6" y="6" width="1.3" height="8" fill="#f75444"/><rect x="5.85" y="6" width="1.3" height="8" fill="#f75444"/><rect x="8.1" y="6" width="1.3" height="8" fill="#f75444"/></svg></span></span></td></tr><tr class="even"><td><span class="cb" style="position:relative;top:-4px"></span></td><td>1008</td><td>lee</td><td>20</td><td>19880033979</td><td>0</td><td>0.000</td><td><span class="av" style="background:#c3a0e5">L</span></td><td>1008</td><td>0</td><td><span class="ip">58.17.40.178</span></td><td><span class="st"><span class="dot"></span><span class="z"><i class="c">正</i><i class="c">常</i></span></span></td><td><span class="ab" style="width:65px;background:#444c69;margin-right:5px"><span style="display:inline-flex;align-items:center;height:27px"><svg width="14" height="12" viewBox="0 0 14 12" ><path d="M1 6.2l4 4L13 2.2" fill="none" stroke="#fff" stroke-width="3"/></svg><span style="margin-left:4px"><span class="z"><i class="c">充</i><i class="c">值</i></span></span></span></span><span class="ab" style="width:27px;background:#18bc9c;margin-right:5px"><span style="display:inline-flex;align-items:center;justify-content:center;height:27px;width:27px"><svg width="13" height="13" viewBox="0 0 15 15" ><path d="M11 .5l3.5 3.5-1.8 1.8-3.5-3.5zM8.3 3.2l3.5 3.5L4.5 14 .6 14.9 1 11z" fill="#fff"/></svg></span></span><span class="ab" style="width:27px;background:#f75444"><span style="display:inline-flex;align-items:center;justify-content:center;height:27px;width:27px"><svg width="11" height="14" viewBox="0 0 13 16" ><path d="M4 0h5l.7 1.6H13v2H0v-2h3.3z" fill="#fff"/><path d="M1 4.3h11l-.8 11.7H1.8z" fill="#fff"/><rect x="3.6" y="6" width="1.3" height="8" fill="#f75444"/><rect x="5.85" y="6" width="1.3" height="8" fill="#f75444"/><rect x="8.1" y="6" width="1.3" height="8" fill="#f75444"/></svg></span></span></td></tr><tr class="odd"><td><span class="cb" style="position:relative;top:-4px"></span></td><td>1007</td><td>key007</td><td>20</td><td>18702641607</td><td>4</td><td>2588.000</td><td><span class="av" style="background:#a0b4e5">K</span></td><td>1007</td><td>1006</td><td><span class="ip">47.57.143.16</span></td><td><span class="st"><span class="dot"></span><span class="z"><i class="c">正</i><i class="c">常</i></span></span></td><td><span class="ab" style="width:65px;background:#444c69;margin-right:5px"><span style="display:inline-flex;align-items:center;height:27px"><svg width="14" height="12" viewBox="0 0 14 12" ><path d="M1 6.2l4 4L13 2.2" fill="none" stroke="#fff" stroke-width="3"/></svg><span style="margin-left:4px"><span class="z"><i class="c">充</i><i class="c">值</i></span></span></span></span><span class="ab" style="width:27px;background:#18bc9c;margin-right:5px"><span style="display:inline-flex;align-items:center;justify-content:center;height:27px;width:27px"><svg width="13" height="13" viewBox="0 0 15 15" ><path d="M11 .5l3.5 3.5-1.8 1.8-3.5-3.5zM8.3 3.2l3.5 3.5L4.5 14 .6 14.9 1 11z" fill="#fff"/></svg></span></span><span class="ab" style="width:27px;background:#f75444"><span style="display:inline-flex;align-items:center;justify-content:center;height:27px;width:27px"><svg width="11" height="14" viewBox="0 0 13 16" ><path d="M4 0h5l.7 1.6H13v2H0v-2h3.3z" fill="#fff"/><path d="M1 4.3h11l-.8 11.7H1.8z" fill="#fff"/><rect x="3.6" y="6" width="1.3" height="8" fill="#f75444"/><rect x="5.85" y="6" width="1.3" height="8" fill="#f75444"/><rect x="8.1" y="6" width="1.3" height="8" fill="#f75444"/></svg></span></span></td></tr><tr class="even"><td><span class="cb" style="position:relative;top:-4px"></span></td><td>1006</td><td>key006</td><td>20</td><td>18702641606</td><td>0</td><td>30.860</td><td><span class="av" style="background:#a0d7e5">K</span></td><td>1006</td><td>1005</td><td><span class="ip">183.217.209.174</span></td><td><span class="st"><span class="dot"></span><span class="z"><i class="c">正</i><i class="c">常</i></span></span></td><td><span class="ab" style="width:65px;background:#444c69;margin-right:5px"><span style="display:inline-flex;align-items:center;height:27px"><svg width="14" height="12" viewBox="0 0 14 12" ><path d="M1 6.2l4 4L13 2.2" fill="none" stroke="#fff" stroke-width="3"/></svg><span style="margin-left:4px"><span class="z"><i class="c">充</i><i class="c">值</i></span></span></span></span><span class="ab" style="width:27px;background:#18bc9c;margin-right:5px"><span style="display:inline-flex;align-items:center;justify-content:center;height:27px;width:27px"><svg width="13" height="13" viewBox="0 0 15 15" ><path d="M11 .5l3.5 3.5-1.8 1.8-3.5-3.5zM8.3 3.2l3.5 3.5L4.5 14 .6 14.9 1 11z" fill="#fff"/></svg></span></span><span class="ab" style="width:27px;background:#f75444"><span style="display:inline-flex;align-items:center;justify-content:center;height:27px;width:27px"><svg width="11" height="14" viewBox="0 0 13 16" ><path d="M4 0h5l.7 1.6H13v2H0v-2h3.3z" fill="#fff"/><path d="M1 4.3h11l-.8 11.7H1.8z" fill="#fff"/><rect x="3.6" y="6" width="1.3" height="8" fill="#f75444"/><rect x="5.85" y="6" width="1.3" height="8" fill="#f75444"/><rect x="8.1" y="6" width="1.3" height="8" fill="#f75444"/></svg></span></span></td></tr></table><div style="position:absolute;left:326px;top:820px;height:40px;line-height:40px;white-space:nowrap;color:#333"><span class="z"><i class="c">显</i><i class="c">示</i><i class="c">第</i></span> 1 <span class="z"><i class="c">到</i><i class="c">第</i></span> 10 <span class="z"><i class="c">条</i><i class="c">记</i><i class="c">录</i><i class="c">，</i><i class="c">总</i><i class="c">共</i></span> 14 <span class="z"><i class="c">条</i><i class="c">记</i><i class="c">录</i></span> <span class="z"><i class="c">每</i><i class="c">页</i><i class="c">显</i><i class="c">示</i></span></div><div style="position:absolute;left:730px;top:821px;width:65px;height:41px;border:1px solid #ddd;border-radius:4px;background:#f3f3f3;line-height:39px;padding-left:15px;color:#333">10<i style="position:absolute;left:37px;top:18px"><svg width="10" height="6" viewBox="0 0 10 6" ><path d='M0 6h10L5 .5z' fill='#333'/></svg></i></div><div style="position:absolute;left:800px;top:819px;height:40px;line-height:40px;color:#333"><span class="z"><i class="c">条</i><i class="c">记</i><i class="c">录</i></span></div><div style="position:absolute;left:1472px;top:819px;width:251px;height:43px;border:1px solid #ddd;border-radius:4px;background:#fafafa;overflow:hidden"><div style="position:absolute;left:0;top:0;width:83px;height:41px;line-height:41px;text-align:center;color:#555"><span class="z"><i class="c">上</i><i class="c">一</i><i class="c">页</i></span></div><div style="position:absolute;left:83px;top:-1px;width:42px;height:43px;line-height:43px;text-align:center;color:#fff;background:#444c69">1</div><div style="position:absolute;left:125px;top:0;width:41px;height:41px;line-height:41px;text-align:center;color:#555;border-right:1px solid #ddd">2</div><div style="position:absolute;left:166px;top:0;width:84px;height:41px;line-height:41px;text-align:center;color:#555"><span class="z"><i class="c">下</i><i class="c">一</i><i class="c">页</i></span></div></div><div style="position:absolute;left:1729px;top:819px;width:62px;height:42px;border:1px solid #ccd5de;background:#fff"></div><div style="position:absolute;left:1798px;top:821px;width:65px;height:40px;border:1px solid #ddd;border-radius:4px;background:#f3f3f3;line-height:38px;text-align:center;color:#333"><span class="z"><i class="c">跳</i><i class="c">转</i></span></div>

<svg width="9" height="5" style="position:absolute;left:273px;top:879px"><path d="M0 0h9L4.5 5z" fill="#505050"/></svg><svg width="5" height="9" style="position:absolute;left:8px;top:899px"><path d="M5 0v9L0 4.5z" fill="#a3a3a3"/></svg><svg width="5" height="9" style="position:absolute;left:254px;top:899px"><path d="M0 0v9L5 4.5z" fill="#a3a3a3"/></svg><svg width="9" height="5" style="position:absolute;left:1905px;top:72px"><path d="M0 5h9L4.5 0z" fill="#a3a3a3"/></svg><svg width="9" height="5" style="position:absolute;left:1905px;top:899px"><path d="M0 0h9L4.5 5z" fill="#505050"/></svg><svg width="22" height="56" style="position:absolute;left:1899px;top:842px"><rect x="0" y="0" width="26" height="56" rx="5" fill="#0c0c0c"/><rect x="18" y="0" width="4" height="56" fill="#2a2a2a"/><rect x="7" y="7" width="5" height="1" fill="#aaa"/><rect x="7" y="9" width="5" height="1" fill="#aaa"/><rect x="7" y="11" width="5" height="1" fill="#aaa"/><rect x="7" y="13" width="5" height="1" fill="#aaa"/><rect x="7" y="15" width="5" height="1" fill="#aaa"/><rect x="7" y="17" width="5" height="1" fill="#aaa"/><rect x="7" y="19" width="5" height="1" fill="#aaa"/><rect x="7" y="21" width="5" height="1" fill="#aaa"/><rect x="7" y="23" width="5" height="1" fill="#aaa"/><rect x="7" y="25" width="5" height="1" fill="#aaa"/><rect x="7" y="31" width="5" height="1" fill="#aaa"/><rect x="7" y="33" width="5" height="1" fill="#aaa"/><rect x="7" y="35" width="5" height="1" fill="#aaa"/><rect x="7" y="37" width="5" height="1" fill="#aaa"/><rect x="7" y="39" width="5" height="1" fill="#aaa"/><rect x="7" y="41" width="5" height="1" fill="#aaa"/><rect x="7" y="43" width="5" height="1" fill="#aaa"/><rect x="7" y="45" width="5" height="1" fill="#aaa"/><rect x="7" y="47" width="5" height="1" fill="#aaa"/><rect x="7" y="49" width="5" height="1" fill="#aaa"/><rect x="7" y="25" width="5" height="1" fill="#f0a020"/></svg><div style="position:absolute;left:247px;top:913px;width:1673px;height:1px;background:#cfd3d7"></div></body></html>
